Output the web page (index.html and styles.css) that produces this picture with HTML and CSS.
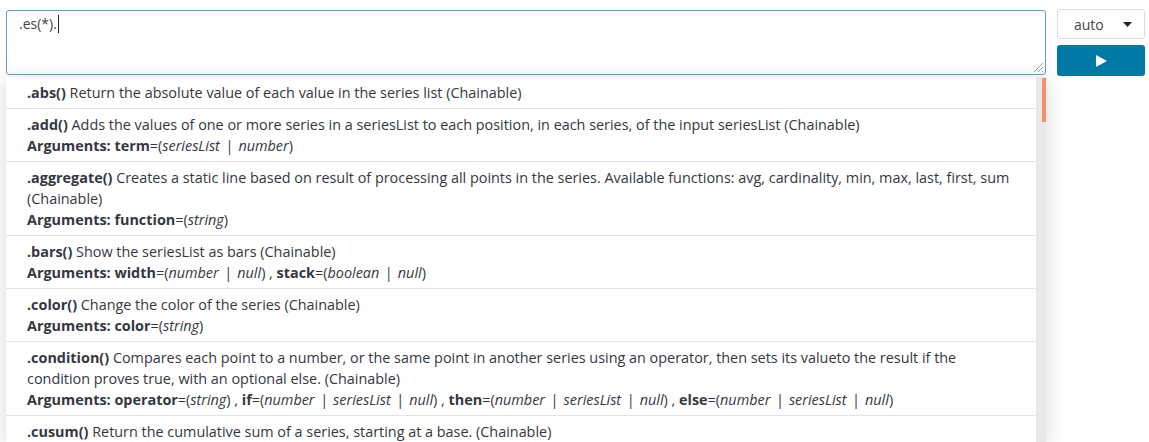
FILE: index.html
```html
<!DOCTYPE html>
<html>
<head>
<meta charset="utf-8">
<link rel="stylesheet" href="styles.css">
</head>
<body>
<div class="page">
  <div class="editor">
    <div class="input">
      <span class="code">.es(*).</span><span class="caret"></span>
      <svg class="grip" width="12" height="12" viewBox="0 0 12 12"><path d="M11 2 L2 11 M11 6 L6 11 M11 10 L10 11" stroke="#9a9a9a" stroke-width="1"/></svg>
    </div>
    <div class="suggestions">
      <ul class="list">
        <li class="item"><b>.abs()</b> Return the absolute value of each value in the series list (Chainable)</li>
        <li class="item"><b>.add()</b> Adds the values of one or more series in a seriesList to each position, in each series, of the input seriesList (Chainable)<br><b>Arguments: term</b>=(<i>seriesList | number</i>)</li>
        <li class="item"><b>.aggregate()</b> Creates a static line based on result of processing all points in the series. Available functions: avg, cardinality, min, max, last, first, sum (Chainable)<br><b>Arguments: function</b>=(<i>string</i>)</li>
        <li class="item"><b>.bars()</b> Show the seriesList as bars (Chainable)<br><b>Arguments: width</b>=(<i>number | null</i>) , <b>stack</b>=(<i>boolean | null</i>)</li>
        <li class="item"><b>.color()</b> Change the color of the series (Chainable)<br><b>Arguments: color</b>=(<i>string</i>)</li>
        <li class="item"><b>.condition()</b> Compares each point to a number, or the same point in another series using an operator, then sets its valueto the result if the condition proves true, with an optional else. (Chainable)<br><b>Arguments: operator</b>=(<i>string</i>) , <b>if</b>=(<i>number | seriesList | null</i>) , <b>then</b>=(<i>number | seriesList | null</i>) , <b>else</b>=(<i>number | seriesList | null</i>)</li>
        <li class="item"><b>.cusum()</b> Return the cumulative sum of a series, starting at a base. (Chainable)<br><b>Arguments: base</b>=(<i>number</i>)</li>
      </ul>
      <div class="track"><div class="thumb"></div></div>
    </div>
  </div>
  <div class="controls">
    <div class="select"><span>auto</span><svg width="9" height="5" viewBox="0 0 9 5"><path d="M0 0 H9 L4.5 5 Z" fill="#222"/></svg></div>
    <div class="run"><svg width="11" height="12" viewBox="0 0 11 12"><path d="M0 0 L11 6 L0 12 Z" fill="#fff"/></svg></div>
  </div>
</div>
</body>
</html>
```
FILE: styles.css
```css
html, body {
  margin: 0;
  padding: 0;
  background: #fff;
  overflow: hidden;
}
body {
  font-family: "Open Sans", "Liberation Sans", sans-serif;
  color: #343741;
  font-size: 14.4px;
}
.page {
  display: flex;
  gap: 11px;
  padding: 10px 0 0 6px;
  height: 432px;
}
.editor {
  width: 1040px;
  display: flex;
  flex-direction: column;
  gap: 2px;
}
.input {
  position: relative;
  border: 1px solid #5a9fc7;
  border-radius: 3px;
  padding: 3px 12px;
  box-sizing: border-box;
  height: 65px;
  line-height: 20px;
  color: #444;
  font-size: 14px;
}
.caret {
  display: inline-block;
  width: 1px;
  height: 18px;
  background: #222;
  vertical-align: -4px;
  margin-left: 1px;
}
.grip {
  position: absolute;
  right: 1px;
  bottom: 1px;
}
.suggestions {
  display: flex;
  flex: 1;
  overflow: hidden;
  box-shadow: 0 2px 18px rgba(0,0,0,0.16);
  background: #fff;
}
.list {
  flex: 1;
  list-style: none;
  margin: 0;
  padding: 0;
}
.item {
  padding: 5px 20px 5px 21px;
  line-height: 21px;
  border-bottom: 1px solid #e3e3e3;
}
.item b { font-weight: 700; }
.item i {
  font-style: italic;
  word-spacing: 1.6px;
}
.track {
  width: 10px;
  background: #e8e8e8;
  display: flex;
  justify-content: flex-end;
}
.thumb {
  width: 4px;
  height: 44px;
  margin-top: 1px;
  background: #f0916b;
}
.controls {
  width: 88px;
  display: flex;
  flex-direction: column;
  gap: 6px;
  margin-top: -1px;
}
.select {
  height: 30px;
  box-sizing: border-box;
  border: 1px solid #dcdcdc;
  border-radius: 3px;
  display: flex;
  align-items: center;
  justify-content: space-between;
  padding: 0 12px 0 16px;
  color: #444;
  font-size: 14px;
}
.run {
  height: 31px;
  background: #0079a5;
  border-radius: 3px;
  display: flex;
  align-items: center;
  justify-content: center;
}
```
